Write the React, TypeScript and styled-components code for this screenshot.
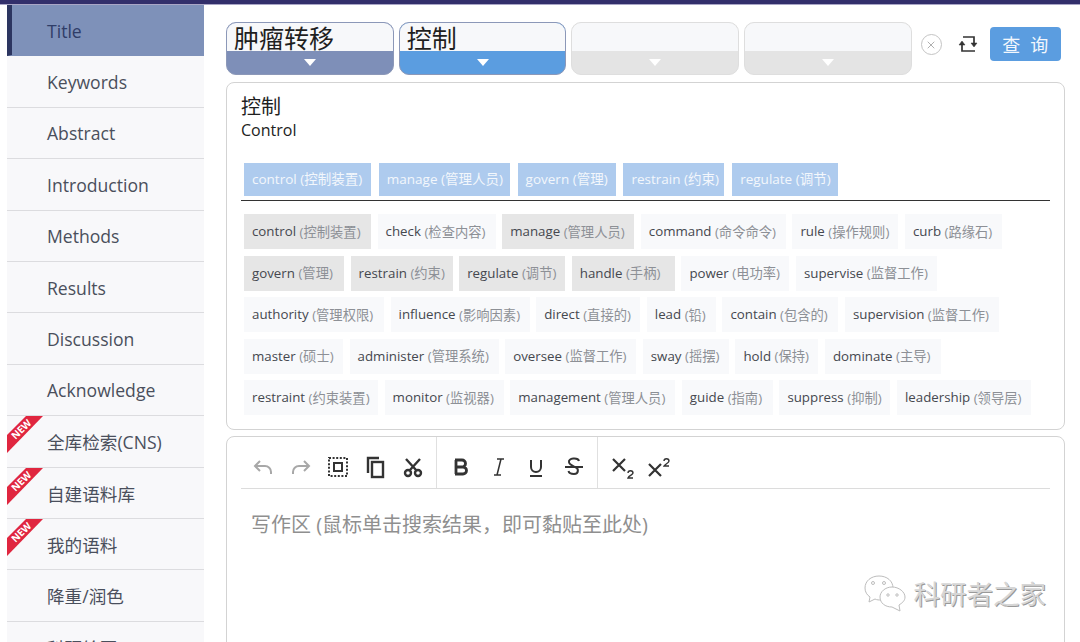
import React from "react";
import styled, { createGlobalStyle } from "styled-components";
import { X } from "lucide-react";

const GlobalStyle = createGlobalStyle`
  html, body {
    margin: 0;
    padding: 0;
    height: 642px;
    overflow: hidden;
    background: #fff;
    font-family: "Open Sans", "Noto Sans CJK SC", sans-serif;
  }
  * { box-sizing: border-box; }
`;

const Page = styled.div`
  position: relative;
  width: 1080px;
  height: 642px;
  overflow: hidden;
`;

const TopBar = styled.div`
  height: 5px;
  background: #322f6b;
  border-bottom: 1px solid #a9a6c6;
`;

const Body = styled.div`
  display: flex;
  height: 637px;
  padding-left: 7px;
`;

const Sidebar = styled.nav`
  width: 197px;
  flex: none;
  background: #f8f8fa;
`;

const NavItem = styled.div<{ $active?: boolean }>`
  position: relative;
  height: 51.4px;
  display: flex;
  align-items: center;
  padding-top: 1px;
  padding-left: ${({ $active }) => ($active ? "35px" : "40px")};
  font-size: 17.6px;
  overflow: hidden;
  color: ${({ $active }) => ($active ? "#2f3d68" : "#4a4f5c")};
  background: ${({ $active }) => ($active ? "#7e91b9" : "transparent")};
  border-left: ${({ $active }) => ($active ? "5px solid #2c3560" : "none")};
  border-bottom: 1px solid ${({ $active }) => ($active ? "#7e91b9" : "#dcdcdf")};
`;

const Ribbon = styled.svg`
  position: absolute;
  left: 0;
  top: 0;
`;

const RibbonText = styled.text`
  font-family: "Open Sans", sans-serif;
  font-size: 10px;
  font-weight: 700;
  fill: #fff;
`;

const Main = styled.main`
  margin-left: 22px;
  width: 839px;
  flex: none;
  display: flex;
  flex-direction: column;
`;

const SearchRow = styled.div`
  display: flex;
  flex: none;
  align-items: flex-start;
  padding-top: 17px;
  height: 77px;
`;

const Slots = styled.div`
  display: flex;
  gap: 5px;
`;

const Slot = styled.div<{ $color?: string }>`
  width: 167.7px;
  height: 53px;
  border-radius: 10px;
  overflow: hidden;
  display: flex;
  flex-direction: column;
  border: 1px solid ${({ $color }) => ($color ? "#8c98b8" : "#dedede")};
  background: ${({ $color }) => $color ?? "#e4e4e4"};
`;

const SlotText = styled.div`
  height: 28px;
  background: #f7f8fa;
  color: #1f1f1f;
  font-size: 25px;
  line-height: 30px;
  padding-left: 7px;
  white-space: nowrap;
`;

const SlotArrow = styled.div`
  flex: 1;
  display: flex;
  justify-content: center;
  align-items: center;
  &::after {
    content: "";
    border-left: 6px solid transparent;
    border-right: 6px solid transparent;
    border-top: 7px solid #fff;
  }
`;

const ClearButton = styled.div`
  width: 21px;
  height: 21px;
  margin: 12px 0 0 9px;
  border: 1px solid #c4c4c4;
  border-radius: 50%;
  color: #b0b0b0;
  display: flex;
  align-items: center;
  justify-content: center;
`;

const SwapIcon = styled.svg`
  margin: 11px 0 0 15px;
`;

const QueryButton = styled.div`
  width: 71px;
  height: 34px;
  margin: 5px 0 0 11px;
  border-radius: 4px;
  background: #5b9de0;
  color: #f2f7fd;
  font-size: 18px;
  letter-spacing: 10px;
  padding-left: 10px;
  display: flex;
  align-items: center;
  justify-content: center;
`;

const Card = styled.section`
  border: 1px solid #d3d3d3;
  border-radius: 8px;
  background: #fff;
`;

const ResultCard = styled(Card)`
  height: 348px;
  flex: none;
  padding: 10px 14px 0;
  overflow: hidden;
`;

const Term = styled.div`
  font-size: 20px;
  line-height: 27px;
  color: #1f1f1f;
`;

const Translation = styled.div`
  font-size: 16px;
  line-height: 21px;
  color: #222;
`;

const SelectedRow = styled.div`
  margin-top: 22px;
  padding: 0 3px;
  height: 38px;
  display: flex;
  gap: 7.8px;
  border-bottom: 1px solid #333;
`;

const SelectedChip = styled.span<{ $width: number }>`
  width: ${({ $width }) => $width}px;
  height: 33px;
  padding: 0 0 3px 8px;
  display: flex;
  align-items: center;
  background: #aecbee;
  color: #f3f7fc;
  font-size: 13.5px;
  white-space: nowrap;
`;

const ChipArea = styled.div`
  margin-top: 13px;
  padding-left: 3px;
  height: 202px;
  overflow: hidden;
  display: flex;
  flex-direction: column;
  gap: 6.6px;
`;

const ChipRow = styled.div`
  display: flex;
  gap: 6.6px;
  flex: none;
`;

const Chip = styled.span<{ $picked?: boolean; $width: number }>`
  width: ${({ $width }) => $width}px;
  height: 35px;
  display: flex;
  align-items: center;
  padding: 0 0 1px 8px;
  font-size: 13.3px;
  white-space: nowrap;
  color: #45484f;
  background: ${({ $picked }) => ($picked ? "#e6e6e6" : "#f8f9fb")};
  & small {
    font-size: 13.3px;
    margin-left: 3.5px;
    color: #8d9096;
  }
`;

const EditorCard = styled(Card)`
  margin-top: 6px;
  flex: none;
  height: 240px;
  padding: 0 14px;
`;

const Toolbar = styled.div`
  height: 52px;
  display: flex;
  border-bottom: 1px solid #dcdcdc;
`;

const ToolGroup = styled.div<{ $width: number; $pad: number; $gap: number }>`
  width: ${({ $width }) => $width}px;
  display: flex;
  align-items: center;
  gap: ${({ $gap }) => $gap}px;
  padding: 8px 0 0 ${({ $pad }) => $pad}px;
  border-right: 1px solid #e0e0e0;
  &:last-child {
    border-right: none;
  }
`;

const Tool = styled.svg<{ $muted?: boolean }>`
  flex: none;
  color: ${({ $muted }) => ($muted ? "#a8a8a8" : "#333")};
`;

const Placeholder = styled.div`
  margin: 23px 0 0 10px;
  font-size: 20px;
  line-height: 26px;
  color: #8f8f8f;
`;

const Watermark = styled.div`
  position: absolute;
  right: 34px;
  bottom: 30px;
  display: flex;
  align-items: center;
  gap: 6px;
  font-size: 26.5px;
  color: #d6d6d6;
  text-shadow: 1px 1px 0 #999;
`;

const navItems = [
  { label: "Title", active: true },
  { label: "Keywords" },
  { label: "Abstract" },
  { label: "Introduction" },
  { label: "Methods" },
  { label: "Results" },
  { label: "Discussion" },
  { label: "Acknowledge" },
  { label: "全库检索(CNS)", isNew: true },
  { label: "自建语料库", isNew: true },
  { label: "我的语料", isNew: true },
  { label: "降重/润色" },
  { label: "科研绘图" },
];

const selected: [string, number][] = [
  ["control (控制装置)", 127],
  ["manage (管理人员)", 131],
  ["govern (管理)", 98],
  ["restrain (约束)", 101],
  ["regulate (调节)", 106],
];

type ChipData = [string, string, number, boolean?];

const chipRows: ChipData[][] = [
  [
    ["control", "(控制装置)", 127, true],
    ["check", "(检查内容)", 118],
    ["manage", "(管理人员)", 132, true],
    ["command", "(命令命令)", 145],
    ["rule", "(操作规则)", 106],
    ["curb", "(路缘石)", 97],
  ],
  [
    ["govern", "(管理)", 100, true],
    ["restrain", "(约束)", 102, true],
    ["regulate", "(调节)", 106, true],
    ["handle", "(手柄)", 103, true],
    ["power", "(电功率)", 108],
    ["supervise", "(监督工作)", 141],
  ],
  [
    ["authority", "(管理权限)", 140],
    ["influence", "(影响因素)", 139],
    ["direct", "(直接的)", 104],
    ["lead", "(铅)", 69],
    ["contain", "(包含的)", 116],
    ["supervision", "(监督工作)", 154],
  ],
  [
    ["master", "(硕士)", 99],
    ["administer", "(管理系统)", 149],
    ["oversee", "(监督工作)", 131],
    ["sway", "(摇摆)", 86],
    ["hold", "(保持)", 83],
    ["dominate", "(主导)", 116],
  ],
  [
    ["restraint", "(约束装置)", 134],
    ["monitor", "(监视器)", 119],
    ["management", "(管理人员)", 165],
    ["guide", "(指南)", 91],
    ["suppress", "(抑制)", 111],
    ["leadership", "(领导层)", 134],
  ],
];

const NewRibbon = () => (
  <Ribbon width="38" height="38" viewBox="0 0 38 38">
    <polygon points="0,19 0,37 36,0 19,0" fill="#e0263f" />
    <RibbonText x="14" y="17" transform="rotate(-45 14 13)" textAnchor="middle">
      NEW
    </RibbonText>
  </Ribbon>
);

const Icon = ({ muted, children }: { muted?: boolean; children: React.ReactNode }) => (
  <Tool
    $muted={muted}
    width="24"
    height="24"
    viewBox="0 0 24 24"
    fill="none"
    stroke="currentColor"
    strokeWidth="2"
  >
    {children}
  </Tool>
);

const App = () => (
  <Page>
    <GlobalStyle />
    <TopBar />
    <Body>
      <Sidebar>
        {navItems.map((item) => (
          <NavItem key={item.label} $active={item.active}>
            {item.isNew && <NewRibbon />}
            {item.label}
          </NavItem>
        ))}
      </Sidebar>
      <Main>
        <SearchRow>
          <Slots>
            <Slot $color="#7e8fb8">
              <SlotText>肿瘤转移</SlotText>
              <SlotArrow />
            </Slot>
            <Slot $color="#5b9de0">
              <SlotText>控制</SlotText>
              <SlotArrow />
            </Slot>
            <Slot>
              <SlotText />
              <SlotArrow />
            </Slot>
            <Slot>
              <SlotText />
              <SlotArrow />
            </Slot>
          </Slots>
          <ClearButton>
            <X size={12} />
          </ClearButton>
          <SwapIcon width="22" height="22" viewBox="0 0 22 22" fill="none" stroke="#333" strokeWidth="1.7">
            <path d="M6 4 H17 V12" />
            <path d="M14 10 H20 L17 14 Z" fill="#333" strokeWidth="0.5" />
            <path d="M5 11 V18 H18" />
            <path d="M2 12 H8 L5 8 Z" fill="#333" strokeWidth="0.5" />
          </SwapIcon>
          <QueryButton>查询</QueryButton>
        </SearchRow>

        <ResultCard>
          <Term>控制</Term>
          <Translation>Control</Translation>
          <SelectedRow>
            {selected.map(([text, width]) => (
              <SelectedChip key={text} $width={width}>
                {text}
              </SelectedChip>
            ))}
          </SelectedRow>
          <ChipArea>
            {chipRows.map((row, i) => (
              <ChipRow key={i}>
                {row.map(([en, zh, width, picked]) => (
                  <Chip key={en} $width={width} $picked={picked}>
                    {en}
                    <small>{zh}</small>
                  </Chip>
                ))}
              </ChipRow>
            ))}
          </ChipArea>
        </ResultCard>

        <EditorCard>
          <Toolbar>
            <ToolGroup $width={196} $pad={10} $gap={13.5}>
              <Icon muted>
                <path d="M9 6 L4 11 L9 16" />
                <path d="M4 11 H14 A6 6 0 0 1 20 17 V19" />
              </Icon>
              <Icon muted>
                <path d="M15 6 L20 11 L15 16" />
                <path d="M20 11 H10 A6 6 0 0 0 4 17 V19" />
              </Icon>
              <Icon>
                <rect x="8" y="8" width="8" height="8" />
                <rect x="3" y="3" width="18" height="18" strokeDasharray="2 1.6" />
              </Icon>
              <Icon>
                <path d="M4 18 V3 H15" strokeWidth="2.4" />
                <rect x="8" y="7" width="11" height="15" strokeWidth="2.4" />
              </Icon>
              <Icon>
                <circle cx="7" cy="18" r="3" strokeWidth="2.4" />
                <circle cx="17" cy="18" r="3" strokeWidth="2.4" />
                <path d="M5 4 L15.5 15.5 M19 4 L8.5 15.5" strokeWidth="2.4" />
              </Icon>
            </ToolGroup>
            <ToolGroup $width={161} $pad={12} $gap={13.5}>
              <Icon>
                <path strokeWidth="2.8" d="M7 5 V19 M6 5 H13 A3.5 3.5 0 0 1 13 12 H7 M7 12 H14 A3.5 3.5 0 0 1 14 19 H6" />
              </Icon>
              <Icon>
                <path strokeWidth="1.5" d="M10 4 H17 M7 20 H14 M14 4 L10 20" />
              </Icon>
              <Icon>
                <path d="M7 5 V12 A5 5 0 0 0 17 12 V5 M6 21 H18" />
              </Icon>
              <Icon>
                <path d="M3 12 H21 M17 6 A5 3 0 0 0 7 7 C7 10 12 11 13 12 C17 13 17 19 12 19 C9 19 7 18 6.5 16" />
              </Icon>
            </ToolGroup>
            <ToolGroup $width={90} $pad={13} $gap={12}>
              <Icon>
                <path strokeWidth="2.2" d="M2 4 L14 16 M14 4 L2 16" />
                <path strokeWidth="1.4" d="M17 18 C17 15 22 15 22 18 C22 20 18 20 17 23 H22" />
              </Icon>
              <Icon>
                <path strokeWidth="2.2" d="M2 9 L14 21 M14 9 L2 21" />
                <path strokeWidth="1.4" d="M17 6 C17 3 22 3 22 6 C22 8 18 9 17 11 H22" />
              </Icon>
            </ToolGroup>
          </Toolbar>
          <Placeholder>写作区 (鼠标单击搜索结果，即可黏贴至此处)</Placeholder>
        </EditorCard>
      </Main>
    </Body>
    <Watermark>
      <svg width="44" height="38" viewBox="0 0 44 38" fill="#fff" stroke="#bdbdbd" strokeWidth="1">
        <path d="M15 2 C7 2 1 7 1 14 C1 18 3 21 6 23 L5 28 L11 25 C13 26 15 26 17 26 C24 26 29 21 29 14 C29 7 23 2 15 2 Z" />
        <path d="M28 13 C21 13 16 18 16 23 C16 29 21 33 28 33 L36 37 L35 31 C38 29 41 27 41 23 C41 18 35 13 28 13 Z" />
        <circle cx="9" cy="9" r="1.5" />
        <circle cx="20" cy="9" r="1.5" />
        <circle cx="24" cy="21" r="1.2" />
        <circle cx="33" cy="21" r="1.2" />
      </svg>
      科研者之家
    </Watermark>
  </Page>
);

export default App;
